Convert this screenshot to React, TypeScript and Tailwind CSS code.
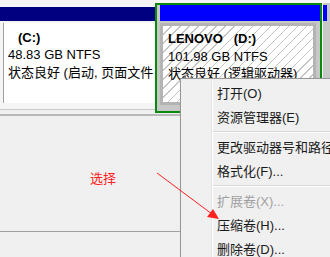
import React from "react";

const font = "font-['Liberation_Sans','Noto_Sans_CJK_SC',sans-serif]";

function MenuItem({ label, disabled }: { label: string; disabled?: boolean }) {
  return (
    <div
      className={`h-[24px] flex items-center pl-[4px] whitespace-nowrap ${
        disabled ? "text-[#a0a0a0]" : "text-[#1a1a1a]"
      }`}
    >
      {label}
    </div>
  );
}

function Sep() {
  return (
    <div className="h-[6px] flex flex-col justify-center">
      <div className="h-px bg-[#d7d7d7]" />
      <div className="h-px bg-white" />
    </div>
  );
}

export default function App() {
  return (
    <div
      className={`relative w-[330px] h-[257px] overflow-hidden bg-[#f0f0f0] text-[13px] leading-[15px] ${font}`}
    >
      {/* disk row */}
      <div className="flex h-[109px] bg-[#f5f5f5]">
        {/* C: */}
        <div className="w-[155px] shrink-0 flex flex-col pt-[7px]">
          <div className="h-[14px] bg-[#000080]" />
          <div className="ml-[3px] mt-[2px] h-[80px] bg-white border-l border-[#a0a0a0] pl-[4px] pt-[7px] text-black">
            <div className="font-bold pl-[10px] h-[17px]">(C:)</div>
            <div className="h-[18px]">48.83 GB NTFS</div>
            <div className="whitespace-nowrap">状态良好 (启动, 页面文件</div>
          </div>
        </div>
        {/* D: */}
        <div className="mt-[3px] w-[167px] h-[110px] shrink-0 border-[2px] border-[#0a8a0a] bg-[#c8c8c8] flex flex-col relative z-10">
          <div className="ml-[3px] h-[16px] bg-[#0000ff]" />
          <div className="ml-[3px] mt-[2px] mr-[4px] flex-1 mb-[6px] border-[3px] border-[#b4b4b4] bg-white bg-[repeating-linear-gradient(135deg,transparent_0_5.4px,#c4c4c4_5.4px_6.4px)] pl-[5px] pt-[5px] text-black overflow-hidden">
            <div className="font-bold h-[18px] whitespace-pre">LENOVO   (D:)</div>
            <div className="h-[17px]">101.98 GB NTFS</div>
            <div className="whitespace-nowrap">状态良好 (逻辑驱动器)</div>
          </div>
        </div>
        {/* next partition */}
        <div className="ml-[1px] w-[8px] shrink-0 mt-[3px] flex flex-col bg-[#c8c8c8]">
          <div className="mt-[2px] h-[16px] w-[4px] bg-[#0000ff]" />
        </div>
      </div>

      {/* scroll strip under disk row */}
      <div className="h-px bg-[#c8c8c8]" />
      <div className="h-[4px] bg-[#f0f0f0]" />
      <div className="h-[2px] bg-[#b9b9b9]" />

      {/* lower area */}
      <div className="h-[115px]" />
      <div className="h-px bg-[#a0a0a0]" />

      {/* annotation text */}
      <div className="absolute left-[90px] top-[171px] text-[#ff2020]">选择</div>

      {/* context menu */}
      <div className="absolute z-20 left-[180px] top-[78px] w-[170px] h-[200px] border border-[#979797] bg-[#f0f0f0] flex pt-[2px] shadow-[2px_2px_3px_rgba(0,0,0,0.3)]">
        <div className="w-[31px] shrink-0 border-r border-[#e2e3e3]" />
        <div className="flex-1 border-l border-white">
          <MenuItem label="打开(O)" />
          <MenuItem label="资源管理器(E)" />
          <Sep />
          <MenuItem label="更改驱动器号和路径(C)..." />
          <MenuItem label="格式化(F)..." />
          <Sep />
          <MenuItem label="扩展卷(X)..." disabled />
          <MenuItem label="压缩卷(H)..." />
          <MenuItem label="删除卷(D)..." />
        </div>
      </div>

      {/* arrow */}
      <svg className="absolute z-30 left-0 top-0 pointer-events-none" width="330" height="257">
        <line x1="157" y1="173" x2="212" y2="214" stroke="#ff2020" strokeWidth="1" />
        <polygon points="219,219 207,217 213,209" fill="#ff2020" />
      </svg>
    </div>
  );
}
